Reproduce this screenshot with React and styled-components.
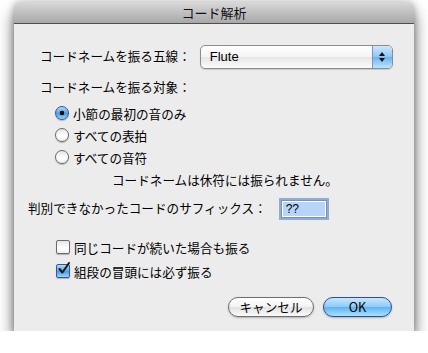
import styled, { createGlobalStyle } from "styled-components"

const Global = createGlobalStyle`
    body {
        margin: 0;
        background: #ffffff;
        font-family: "Noto Sans CJK JP", "Liberation Sans", sans-serif;
        font-size: 12.6px;
        color: #000;
    }
`

const App = () => {
    return(
        <>
            <Global />
            <Window>
                <TitleBar>コード解析</TitleBar>
                <Content>
                    <StaffRow>
                        <Label>コードネームを振る五線：</Label>
                        <Popup>
                            <PopupText>Flute</PopupText>
                            <PopupArrows>
                                <Triangle />
                                <Triangle down />
                            </PopupArrows>
                        </Popup>
                    </StaffRow>
                    <SectionLabel>コードネームを振る対象：</SectionLabel>
                    <RadioList>
                        <Option><Radio checked /><span>小節の最初の音のみ</span></Option>
                        <Option><Radio /><span>すべての表拍</span></Option>
                        <Option><Radio /><span>すべての音符</span></Option>
                    </RadioList>
                    <Note>コードネームは休符には振られません。</Note>
                    <SuffixRow>
                        <Label>判別できなかったコードのサフィックス：</Label>
                        <Field>??</Field>
                    </SuffixRow>
                    <CheckList>
                        <Option tall><Checkbox /><span>同じコードが続いた場合も振る</span></Option>
                        <Option tall>
                            <Checkbox checked>
                                <svg width="14" height="14" viewBox="0 0 14 14">
                                    <path d="M2.5 7 L5.4 10.5 L12 1" fill="none" stroke="#1a1a1a" strokeWidth="2" strokeLinecap="round" strokeLinejoin="round" />
                                </svg>
                            </Checkbox>
                            <span>組段の冒頭には必ず振る</span>
                        </Option>
                    </CheckList>
                    <Buttons>
                        <Button>キャンセル</Button>
                        <Button primary>OK</Button>
                    </Buttons>
                </Content>
            </Window>
        </>
    )
}

const Window = styled.div`
    margin: 2px 0 0 14px;
    width: 400px;
    background: #ececec;
    border-radius: 6px 6px 0 0;
    box-shadow: 0 10px 16px rgba(0, 0, 0, 0.6), 0 0 7px rgba(0, 0, 0, 0.25);
`

const TitleBar = styled.div`
    height: 21px;
    line-height: 21px;
    text-align: center;
    font-size: 13px;
    color: #111;
    background: linear-gradient(#d8d8d8, #a8a8a8);
    border-bottom: 1px solid #4e4e4e;
    border-radius: 6px 6px 0 0;
`

const Content = styled.div`
    display: flex;
    flex-direction: column;
    padding: 21px 22px 14px 0;
`

const StaffRow = styled.div`
    display: flex;
    align-items: center;
    height: 24px;
    padding-left: 26px;
    gap: 9px;
`

const Label = styled.span`
    white-space: nowrap;
    margin-top: -4px;
`

const Popup = styled.div`
    flex: 0 0 193px;
    height: 24px;
    box-sizing: border-box;
    display: flex;
    border: 1px solid #8c8c8c;
    border-radius: 5px;
    background: linear-gradient(#ffffff, #f4f4f4 50%, #e6e6e6 51%, #fbfbfb);
    overflow: hidden;
    box-shadow: 0 1px 1px rgba(0, 0, 0, 0.15);
`

const PopupText = styled.span`
    flex: 1;
    padding-left: 9px;
    line-height: 22px;
    font-family: "Liberation Sans", sans-serif;
    font-size: 13px;
`

const PopupArrows = styled.div`
    width: 19px;
    display: flex;
    flex-direction: column;
    align-items: center;
    justify-content: center;
    gap: 2px;
    border-left: 1px solid #7c94b8;
    background: linear-gradient(#cfe6fb, #8ec6f4 50%, #6cb2ef 51%, #bfe4fd);
`

const Triangle = styled.div`
    width: 0;
    height: 0;
    border-left: 3px solid transparent;
    border-right: 3px solid transparent;
    ${p => p.down ? "border-top: 4px solid #111;" : "border-bottom: 4px solid #111;"}
`

const SectionLabel = styled.div`
    height: 18px;
    line-height: 18px;
    margin-top: 9px;
    padding-left: 26px;
`

const RadioList = styled.div`
    display: flex;
    flex-direction: column;
    margin-top: 6px;
    padding-left: 41px;
`

const Option = styled.label`
    display: flex;
    align-items: center;
    gap: 4px;
    height: ${p => p.tall ? 24 : 22}px;
`

const Radio = styled.span`
    flex: 0 0 14px;
    height: 14px;
    box-sizing: border-box;
    border-radius: 50%;
    border: 1px solid ${p => p.checked ? "#35598a" : "#6a6a6a"};
    background: ${p => p.checked
        ? "radial-gradient(circle, #111 0 2px, transparent 2.6px), linear-gradient(#b3d9fa, #4f9ee6 55%, #9ad2fb)"
        : "linear-gradient(#e4e4e4, #ffffff 55%, #f0f0f0)"};
    box-shadow: 0 1px 1px rgba(0, 0, 0, 0.25);
`

const Note = styled.div`
    height: 18px;
    line-height: 18px;
    margin-top: 3px;
    padding-left: 98px;
`

const SuffixRow = styled.div`
    display: flex;
    align-items: center;
    height: 22px;
    margin-top: 9px;
    padding-left: 14px;
    gap: 15px;
`

const Field = styled.div`
    width: 44px;
    height: 16px;
    box-sizing: border-box;
    padding-left: 3px;
    line-height: 15px;
    font-family: "Liberation Sans", sans-serif;
    font-size: 12px;
    background: #b7d4fb;
    border: 1px solid #ffffff;
    outline: 1px solid #8e8e8e;
    box-shadow: 0 0 0 3px #86b0e3;
`

const CheckList = styled.div`
    display: flex;
    flex-direction: column;
    margin-top: 15px;
    padding-left: 42px;
`

const Checkbox = styled.span`
    flex: 0 0 14px;
    height: 14px;
    box-sizing: border-box;
    border-radius: 2px;
    border: 1px solid ${p => p.checked ? "#35598a" : "#6a6a6a"};
    background: ${p => p.checked
        ? "linear-gradient(#b3d9fa, #4f9ee6 55%, #9ad2fb)"
        : "linear-gradient(#e4e4e4, #ffffff 55%, #f0f0f0)"};
    box-shadow: 0 1px 1px rgba(0, 0, 0, 0.25);
    position: relative;
    svg {
        position: absolute;
        left: 0;
        top: -3px;
    }
`

const Buttons = styled.div`
    display: flex;
    justify-content: flex-end;
    gap: 9px;
    margin-top: 14px;
`

const Button = styled.button`
    height: 20px;
    width: ${p => p.primary ? 69 : 86}px;
    box-sizing: border-box;
    padding: 0;
    border-radius: 10px;
    font-family: "Noto Sans CJK JP", "Liberation Sans", sans-serif;
    font-size: 12.6px;
    line-height: 18px;
    color: #000;
    border: 1px solid ${p => p.primary ? "#2d4f8a" : "#6d6d6d"};
    background: ${p => p.primary
        ? "linear-gradient(#c8e6fd, #8ccaf8 50%, #5db3f4 51%, #a9e0ff)"
        : "linear-gradient(#ffffff, #f3f3f3 50%, #e2e2e2 51%, #fafafa)"};
    box-shadow: 0 1px 2px rgba(0, 0, 0, 0.25);
`

export default App
